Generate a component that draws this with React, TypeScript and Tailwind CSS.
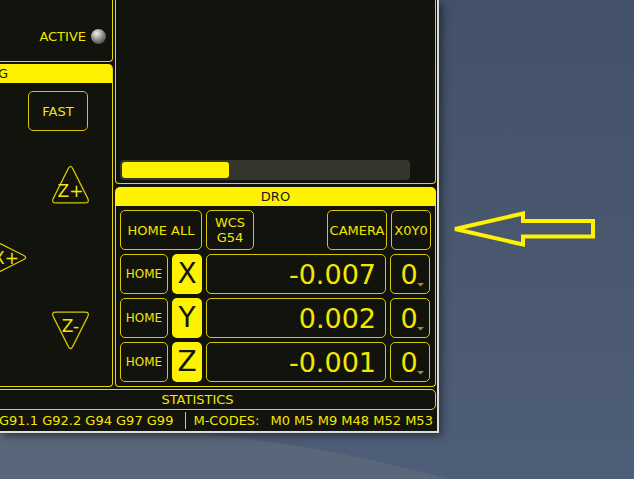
import React from "react";

function OutBtn({ className = "", children }: { className?: string; children: React.ReactNode }) {
  return (
    <div
      className={
        "flex items-center justify-center rounded-[5px] border border-[#d8c800] text-[#f5e600] leading-none " +
        className
      }
    >
      {children}
    </div>
  );
}

function TriUp() {
  return (
    <svg width="41" height="41" viewBox="0 0 40 40" className="col-start-1 row-start-1">
      <path
        d="M22.2 5.5 L36.8 34.5 Q39 39 34 39 L6 39 Q1 39 3.2 34.5 L17.8 5.5 Q20 1 22.2 5.5 Z"
        fill="none"
        stroke="#d8c800"
        strokeWidth="1.2"
      />
    </svg>
  );
}
function TriDown() {
  return (
    <svg width="41" height="41" viewBox="0 0 40 40" className="col-start-1 row-start-1">
      <path
        d="M17.8 34.5 L3.2 5.5 Q1 1 6 1 L34 1 Q39 1 36.8 5.5 L22.2 34.5 Q20 39 17.8 34.5 Z"
        fill="none"
        stroke="#d8c800"
        strokeWidth="1.2"
      />
    </svg>
  );
}
function TriRight() {
  return (
    <svg width="41" height="41" viewBox="0 0 40 40" className="col-start-1 row-start-1">
      <path
        d="M34.5 17.8 L5.5 3.2 Q1 1 1 6 L1 34 Q1 39 5.5 36.8 L34.5 22.2 Q39 20 34.5 17.8 Z"
        fill="none"
        stroke="#d8c800"
        strokeWidth="1.2"
      />
    </svg>
  );
}

function AxisRow({ axis, value }: { axis: string; value: string }) {
  return (
    <div className="flex h-[40px] gap-[4px]">
      <OutBtn className="w-[48px] text-[12px]">HOME</OutBtn>
      <div className="flex w-[30px] items-center justify-center rounded-[5px] bg-[#fff200] text-[28px] leading-none text-[#14140e]">
        {axis}
      </div>
      <OutBtn className="w-[180px] !justify-end pr-[9px] text-[27px]">{value}</OutBtn>
      <OutBtn className="relative w-[40px] pr-[2px] text-[27px]">
        0
        <svg width="7" height="4" viewBox="0 0 7 4" className="absolute bottom-[6px] right-[5px]">
          <polygon points="0,0 7,0 3.5,3.5" fill="#a08c28" />
        </svg>
      </OutBtn>
    </div>
  );
}

export default function App() {
  return (
    <div
      className="relative h-[479px] w-[634px] overflow-hidden bg-[linear-gradient(to_bottom,#43506a,#4a586f_55%,#4f5e78)] font-['DejaVu_Sans',sans-serif]"
    >
      <div className="absolute left-[-743px] top-[423px] h-[554px] w-[1486px] rounded-[50%] bg-[#5a6679]" />

      {/* window */}
      <div className="relative flex h-[433px] w-[439px] flex-col border-b-2 border-r-2 border-[#dcdcdc] bg-[#12130d] shadow-[3px_3px_8px_rgba(0,0,0,0.45)]">
        <div className="flex h-[387px] gap-[2px]">
          {/* left column */}
          <div className="flex w-[113px] flex-col gap-[2px]">
            <div className="flex h-[62px] items-start justify-end gap-[5px] rounded-br-[4px] border-b border-r border-[#e6d600] pr-[6px] pt-[29px]">
              <span className="text-[13px] leading-[15px] text-[#f5e600]">ACTIVE</span>
              <div className="h-[15px] w-[15px] rounded-full bg-[radial-gradient(circle_at_38%_30%,#f0f0f0,#9a9a9a_40%,#3a3a3a_85%)]" />
            </div>
            <div className="flex h-[323px] flex-col rounded-br-[4px] rounded-tr-[5px] border-b border-r border-[#e6d600]">
              <div className="flex h-[19px] items-center justify-end overflow-hidden whitespace-nowrap rounded-tr-[4px] bg-[#fff200] pr-[104px] text-[13px] leading-none text-[#1a1a12]">
                JOG
              </div>
              <div className="flex flex-col items-start">
                <OutBtn className="ml-[28px] mt-[8px] h-[40px] w-[60px] text-[13px]">FAST</OutBtn>
                <div className="ml-[50px] mt-[32px] grid">
                  <TriUp />
                  <span className="col-start-1 row-start-1 justify-self-center pt-[20px] text-[17px] leading-[16px] text-[#f5e600]">
                    Z+
                  </span>
                </div>
                <div className="ml-[-12px] mt-[33px] grid">
                  <TriRight />
                  <span className="col-start-1 row-start-1 self-center justify-self-center pr-[5px] text-[17px] leading-[16px] text-[#f5e600]">
                    X+
                  </span>
                </div>
                <div className="ml-[50px] mt-[33px] grid">
                  <TriDown />
                  <span className="col-start-1 row-start-1 justify-self-center pt-[7px] text-[17px] leading-[16px] text-[#f5e600]">
                    Z-
                  </span>
                </div>
              </div>
            </div>
          </div>

          {/* right column */}
          <div className="flex w-[321px] flex-col gap-[3px]">
            <div className="flex h-[184px] flex-col justify-end rounded-b-[4px] border-b border-l border-r border-[#e6d600] pb-[3px] pl-[4px]">
              <div className="h-[20px] w-[290px] rounded-[4px] bg-[#34362c] p-[2px]">
                <div className="h-full w-[107px] rounded-[3px] bg-[#fff200]" />
              </div>
            </div>
            <div className="flex h-[200px] flex-col">
              <div className="flex h-[19px] items-center justify-center rounded-t-[5px] bg-[#fff200] text-[13px] leading-none text-[#1a1a12]">
                DRO
              </div>
              <div className="flex flex-1 flex-col gap-[4px] rounded-b-[4px] border-b border-l border-r border-[#e6d600] p-[4px]">
                <div className="flex h-[40px] gap-[4px]">
                  <OutBtn className="w-[82px] text-[13px]">HOME ALL</OutBtn>
                  <OutBtn className="w-[48px] flex-col text-center text-[13px] !leading-[15px]">
                    <span>WCS</span>
                    <span>G54</span>
                  </OutBtn>
                  <div className="flex-1" />
                  <OutBtn className="w-[60px] text-[13px]">CAMERA</OutBtn>
                  <OutBtn className="w-[40px] text-[13px]">X0Y0</OutBtn>
                </div>
                <AxisRow axis="X" value="-0.007" />
                <AxisRow axis="Y" value="0.002" />
                <AxisRow axis="Z" value="-0.001" />
              </div>
            </div>
          </div>
        </div>

        <div className="ml-[-41px] mt-[2px] flex h-[21px] w-[477px] items-center justify-center rounded-[5px] border border-[#e6d600] text-[13px] leading-none text-[#f5e600]">
          STATISTICS
        </div>
        <div className="flex h-[21px] items-center whitespace-nowrap text-[13px] leading-none text-[#f5e600]">
          <span className="ml-[-1px]">G91.1 G92.2 G94 G97 G99</span>
          <div className="ml-[12px] h-[17px] w-px bg-[#e6d600]" />
          <span className="ml-[7px]">M-CODES:</span>
          <span className="ml-[11px]">M0 M5 M9 M48 M52 M53</span>
        </div>
      </div>

      {/* annotation arrow */}
      <svg className="pointer-events-none absolute left-0 top-0" width="634" height="479" viewBox="0 0 634 479">
        <polygon
          points="455,229 523,213.5 523,221 593,221 593,236.5 523,236.5 523,244.5"
          fill="none"
          stroke="#fff200"
          strokeWidth="4"
          strokeLinejoin="miter"
        />
      </svg>
    </div>
  );
}
